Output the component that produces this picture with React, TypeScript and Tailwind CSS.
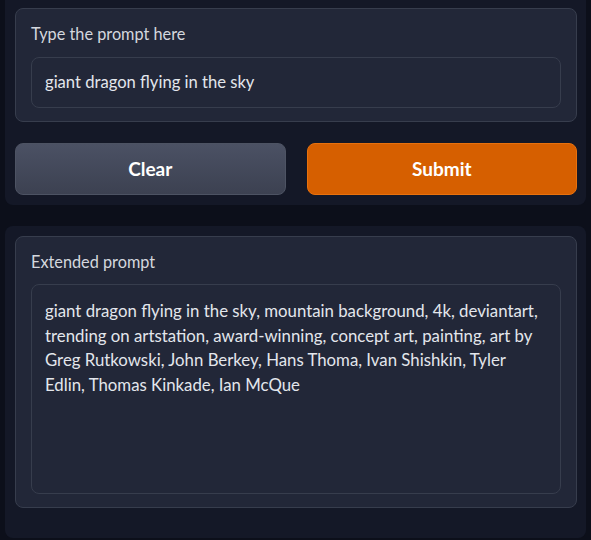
const font = { fontFamily: '"Lato", "Liberation Sans", sans-serif' };

function Block({ label, children, className = '' }: { label: string; children: React.ReactNode; className?: string }) {
  return (
    <div className={`rounded-lg border border-[#373d4d] bg-[#222738] px-[15px] pb-[13px] pt-[15px] ${className}`}>
      <div className="text-[16.3px] leading-[20px] text-[#d4d7de]">{label}</div>
      {children}
    </div>
  );
}

export default function App() {
  return (
    <div className="min-h-[540px] w-[591px] bg-[#0c0f1a] px-[5px] text-[#e5e7eb]" style={font}>
      {/* Input panel */}
      <div className="rounded-b-lg bg-[#141827] pb-[10px] pl-[10px] pr-[9px] pt-2">
        <Block label="Type the prompt here">
          <div className="mt-[13px] flex h-[51px] items-center rounded-lg border border-[#373d4d] bg-[#222738] px-[13px] text-[16.6px] text-[#e3e6ec]">
            giant dragon flying in the sky
          </div>
        </Block>
        <div className="mt-[21px] flex gap-[21px]">
          <button className="h-[52px] flex-1 rounded-lg border border-[#4d5363] bg-gradient-to-b from-[#4b5164] to-[#3c4151] text-[19px] font-bold text-white">
            Clear
          </button>
          <button className="h-[52px] flex-1 rounded-lg border border-[#e8710d] bg-[#d65f00] text-[19px] font-bold text-white">
            Submit
          </button>
        </div>
      </div>

      {/* Output panel */}
      <div className="mt-[21px] rounded-lg bg-[#141827] pb-[30px] pl-[10px] pr-[9px] pt-[10px]">
        <Block label="Extended prompt">
          <div className="mt-3 h-[210px] rounded-lg border border-[#373d4d] bg-[#222738] px-[13px] pt-[14px] text-[16.8px] leading-[24.7px] text-[#e3e6ec]">
            giant dragon flying in the sky, mountain background, 4k, deviantart,
            <br />
            trending on artstation, award-winning, concept art, painting, art by
            <br />
            Greg Rutkowski, John Berkey, Hans Thoma, Ivan Shishkin, Tyler
            <br />
            Edlin, Thomas Kinkade, Ian McQue
          </div>
        </Block>
      </div>
    </div>
  );
}
